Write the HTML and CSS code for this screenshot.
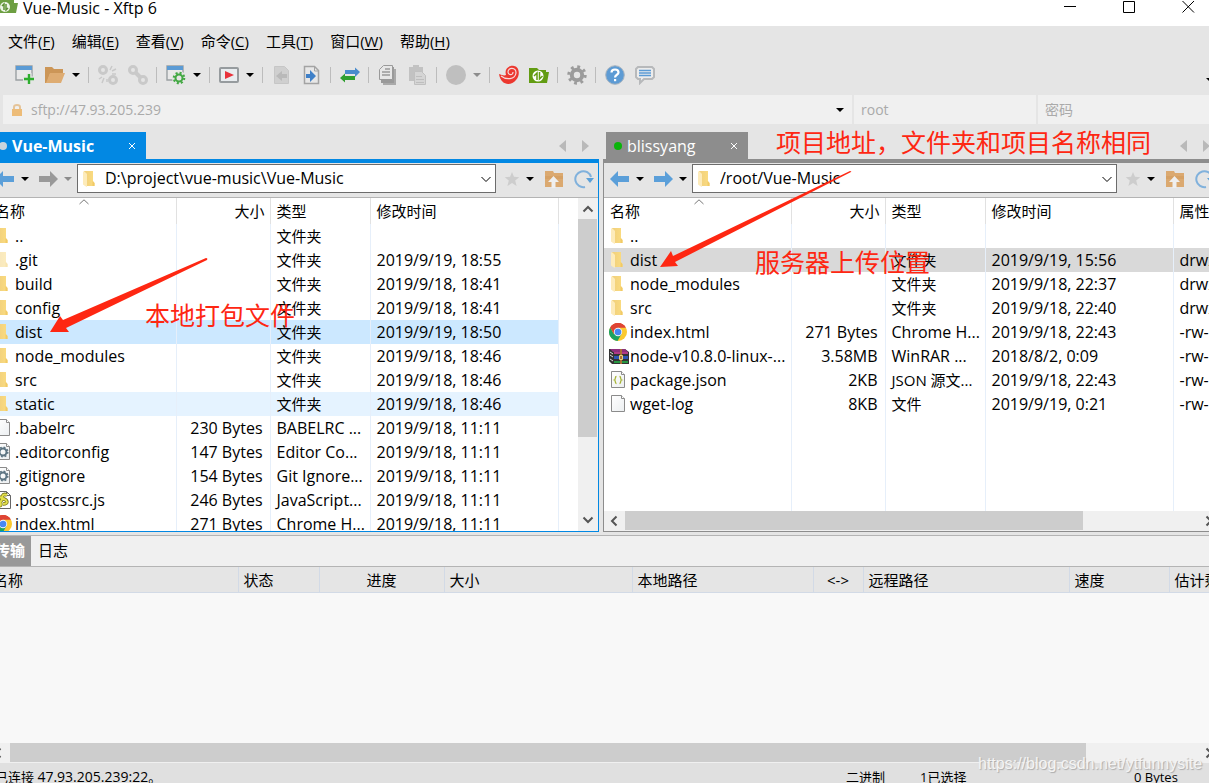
FILE: index.html
```html
<!DOCTYPE html>
<html lang="zh-CN">
<head>
<meta charset="utf-8">
<title>Vue-Music - Xftp 6</title>
<link rel="stylesheet" href="styles.css">
</head>
<body>
<svg class="defs" aria-hidden="true">
  <defs>
    <linearGradient id="fold" x1="0" x2="1"><stop offset="0" stop-color="#f0cf7c"/><stop offset="1" stop-color="#fbdc80"/></linearGradient>
    <linearGradient id="paper" x1="0" x2="1" y2="1"><stop offset="0" stop-color="#fff"/><stop offset="1" stop-color="#eceff1"/></linearGradient>
    <symbol id="folder" viewBox="0 0 20 20"><path fill="url(#fold)" d="M3 2h9v10l1.500 2v3H4z"/><path fill="#f1ca66" d="M11.500 12l2 2v3h-2z"/><path fill="#fdebba" d="M2 2.500h1.500L6 5v13l-2-1-2-1.500z"/></symbol>
    <symbol id="file" viewBox="0 0 20 20"><path fill="url(#paper)" stroke="#8b8b8b" d="M2.500 1.500h10l3 3v13h-13z"/><path fill="#fff" stroke="#8b8b8b" d="M12.500 1.500v3h3"/></symbol>
    <symbol id="gearfile" viewBox="0 0 20 20"><use href="#file"/><circle cx="9" cy="10" r="3.500" fill="none" stroke="#5d7583" stroke-width="2"/><circle cx="9" cy="10" r="4.800" fill="none" stroke="#5d7583" stroke-width="1.500" stroke-dasharray="1.900 1.870"/></symbol>
    <symbol id="jsfile" viewBox="0 0 20 20"><path fill="#fff" stroke="#666" d="M1.500 1.500h11l4 4v13h-15z"/><path fill="none" stroke="#666" d="M12.500 1.500v4h4"/><path fill="none" stroke="#77761b" stroke-width="3.600" d="M13 5C8 3 7 8 10 9s5 5-1 5M3 8c5-2 6 1 4 3s3 5-4 5"/><path fill="none" stroke="#e3df4b" stroke-width="2" d="M13 5C8 3 7 8 10 9s5 5-1 5M3 8c5-2 6 1 4 3s3 5-4 5"/></symbol>
    <symbol id="jsonfile" viewBox="0 0 20 20"><use href="#file"/><path fill="none" stroke="#a6b435" stroke-width="1.300" d="M7.500 6.500c-2 0-.5 3-2 3.500 1.500.5 0 3.500 2 3.500M10.500 6.500c2 0 .5 3 2 3.500-1.500.5 0 3.500-2 3.500"/></symbol>
    <symbol id="chrome" viewBox="0 0 20 20"><circle cx="9" cy="10" r="9" fill="#fbc92f"/><path fill="#de4435" d="M9 10L1.200 5.500A9 9 0 0 1 16.800 5.500H9z"/><path fill="#1ca261" d="M1.200 5.500A9 9 0 0 0 8.500 19l4-7-8-.5z"/><path fill="#de4435" d="M1.200 5.500L5 12l4-6.500h7.800A9 9 0 0 0 1.200 5.500"/><circle cx="9" cy="10" r="4.200" fill="#f2f5fa"/><circle cx="9" cy="10" r="3.300" fill="#4688f1"/></symbol>
    <symbol id="rar" viewBox="0 0 20 20"><path fill="#333" d="M0 3h16l4 3v12H3l-3-3z"/><path fill="#8e2f7c" d="M1 3h15l3 3H4z"/><path fill="#b03a86" d="M5 6h14v2H5z"/><path fill="#2d55b5" d="M5 10h14v3H5z"/><path fill="#259642" d="M5 15h14v2H5z"/><path stroke="#ddd" d="M1 6l3 2M1 9l3 2M1 13l3 2"/><path fill="#a96f35" d="M11 3h2v15h-2z"/><path fill="none" stroke="#e9d078" d="M10.500 9.500h3v4h-3z"/></symbol>
    <symbol id="caret" viewBox="0 0 8 8"><path d="M0 2h8L4 6z" fill="currentColor"/></symbol>
    <symbol id="left" viewBox="0 0 20 20"><path fill="currentColor" d="M0 10l8-8v5h11v6H8v5z"/></symbol>
    <symbol id="right" viewBox="0 0 20 20"><path fill="currentColor" d="M20 10l-8-8v5H1v6h11v5z"/></symbol>
    <symbol id="star" viewBox="0 0 18 18"><path fill="#cdcdcd" d="M9 1l2.200 5.600 6 .4-4.600 3.800L14.200 17 9 13.600 3.800 17l1.600-6.200L.8 7l6-.4z"/></symbol>
    <symbol id="folderup" viewBox="0 0 20 20"><path fill="#dba970" d="M1 2h8l1 2h9v14H1z"/><path fill="#cf9656" d="M1 7h18v3H1z" opacity=".4"/><path fill="#efefef" d="M9.500 7L15 13h-3.500v6h-4v-6H4z"/></symbol>
    <symbol id="refresh" viewBox="0 0 20 20"><path fill="none" stroke="#80b1dc" stroke-width="2" d="M17 8A8 8 0 1 0 11 18"/><path fill="#5ba0d8" d="M12 9h8l-4 5z"/></symbol>
    <symbol id="tri-l" viewBox="0 0 8 12"><path fill="#b9b9b9" d="M7 0v12L0 6z"/></symbol>
    <symbol id="tri-r" viewBox="0 0 8 12"><path fill="#b9b9b9" d="M1 0v12l7-6z"/></symbol>
    <symbol id="down" viewBox="0 0 10 10"><path fill="none" stroke="currentColor" d="M.5 3L5 7.500 9.500 3"/></symbol>
    <symbol id="x" viewBox="0 0 8 8"><path fill="none" stroke="currentColor" d="M1 1l6 6M7 1L1 7"/></symbol>
    <symbol id="b-up" viewBox="0 0 12 12"><path fill="none" stroke="#555" stroke-width="2" d="M1.500 8.500L6 4l4.500 4.500"/></symbol>
    <symbol id="b-down" viewBox="0 0 12 12"><path fill="none" stroke="#555" stroke-width="2" d="M1.500 3.500L6 8l4.500-4.500"/></symbol>
    <symbol id="b-left" viewBox="0 0 12 12"><path fill="none" stroke="#555" stroke-width="2" d="M7.500 1.500L3 6l4.500 4.500"/></symbol>
    <symbol id="b-right" viewBox="0 0 12 12"><path fill="none" stroke="#555" stroke-width="2" d="M3.500 1.500L8 6l-4.500 4.500"/></symbol>
    <symbol id="win" viewBox="0 0 20 20"><path fill="#e9e9e9" stroke="#9ba0a3" stroke-width="1.400" d="M1 1h16v14H1z"/><path fill="#5b9bd5" d="M1 1h16v4H1z"/></symbol>
    <symbol id="link" viewBox="0 0 20 20"><g fill="none" stroke="#c9c9c9" stroke-width="3"><circle cx="5" cy="5" r="3.500"/><circle cx="15" cy="15" r="3.500"/></g></symbol>
  </defs>
</svg>

<div class="window">
  <header class="titlebar">
    <svg width="18" height="14" viewBox="0 0 18 14"><path fill="#6d9f42" d="M0 0h14v3h4l-2 10H0z"/><circle cx="5" cy="7" r="5" fill="#eef5e8"/><path fill="none" stroke="#5f9136" stroke-width="1.500" d="M4 10V4L2 6M6 4v6l2-2"/></svg>
    <h1 class="title">Vue-Music - Xftp 6</h1>
    <div class="controls">
      <button aria-label="最小化"><svg width="13" height="13"><path stroke="#000" d="M0 6.500h12"/></svg></button>
      <button aria-label="最大化"><svg width="13" height="13"><path fill="none" stroke="#000" d="M.5 1.500h11v11H.5z"/></svg></button>
      <button aria-label="关闭"><svg width="13" height="13"><path stroke="#000" d="M.5 1l11.500 11.500M12 1L.5 12.500"/></svg></button>
    </div>
  </header>

  <nav class="menubar">
    <button>文件(<u>F</u>)</button><button>编辑(<u>E</u>)</button><button>查看(<u>V</u>)</button><button>命令(<u>C</u>)</button><button>工具(<u>T</u>)</button><button>窗口(<u>W</u>)</button><button>帮助(<u>H</u>)</button>
  </nav>

  <div class="toolbar">
    <button class="tool" aria-label="新建"><svg viewBox="0 0 20 20"><use href="#win"/><path stroke="#e5e5e5" stroke-width="5" d="M14 8v12M8 14h12"/><path stroke="#2eae2e" stroke-width="2.400" d="M14 9v10M9 14h10"/></svg></button>
    <button class="tool" aria-label="打开"><svg viewBox="0 0 20 20"><path fill="#cc9657" d="M0 2h7l2 2h9v5H5L2 18H0z"/><path fill="#deac72" d="M5 8h15l-4 10H1z"/></svg></button>
    <button class="drop" aria-label="打开选项"><svg><use href="#caret"/></svg></button>
    <span class="sep"></span>
    <button class="tool" aria-label="断开"><svg viewBox="0 0 20 20"><use href="#link"/><path stroke="#c9c9c9" stroke-width="1.500" d="M12 5l2-4M14 6l4-2M14 9h4M6 13l-2 5M4 12l-3 2M9 14v3"/></svg></button>
    <button class="tool" aria-label="连接"><svg viewBox="0 0 20 20"><use href="#link"/><path stroke="#c9c9c9" stroke-width="4" d="M7 7l6 6"/></svg></button>
    <span class="sep"></span>
    <button class="tool" aria-label="会话属性"><svg viewBox="0 0 20 20"><use href="#win"/><circle cx="13" cy="13" r="7" fill="#e5e5e5"/><circle cx="13" cy="13" r="3.500" fill="none" stroke="#43a843" stroke-width="2"/><circle cx="13" cy="13" r="5.200" fill="none" stroke="#43a843" stroke-width="2.200" stroke-dasharray="2 2.080"/></svg></button>
    <button class="drop" aria-label="属性选项"><svg><use href="#caret"/></svg></button>
    <span class="sep"></span>
    <button class="tool" aria-label="启动"><svg viewBox="0 0 20 20"><rect x="1" y="3" width="18" height="14" rx="1" fill="#e8ecef" stroke="#969b9e" stroke-width="2"/><path fill="#e8323c" d="M6 6l9 4-9 4z"/></svg></button>
    <button class="drop" aria-label="启动选项"><svg><use href="#caret"/></svg></button>
    <span class="sep"></span>
    <button class="tool" aria-label="下载"><svg viewBox="0 0 20 20"><path fill="#cfcfcf" stroke="#c6c6c6" d="M2.500 1.500h10l4 4v13h-14z"/><path fill="#b9b9b9" d="M4 11l6-5v3h5v4h-5v3z"/></svg></button>
    <button class="tool" aria-label="上传"><svg viewBox="0 0 20 20"><path fill="#e7e7e7" stroke="#a3a3a3" stroke-width="1.500" d="M2.500 1.500h10l4 4v13h-14z"/><path fill="none" stroke="#a3a3a3" d="M12.500 1v5H17"/><path fill="#3f80c8" d="M14 11L8 5v4H4v4h4v4z"/></svg></button>
    <span class="sep"></span>
    <button class="tool" aria-label="同步"><svg viewBox="0 0 20 20"><path fill="#4a8ccd" d="M20 7l-5-4.500V5H5v4h10v3z"/><path fill="#30a030" d="M0 13l5-4.500V11h10v4H5v2.500z"/></svg></button>
    <span class="sep"></span>
    <button class="tool" aria-label="复制"><svg viewBox="0 0 20 20"><path fill="#aaa" d="M5 4h13v16H5z"/><path fill="#9a9a9a" d="M3 2h13v16H3z"/><path fill="#e7e7e7" stroke="#9a9a9a" d="M5.500.500h9v14h-13v-10z"/><path stroke="#9a9a9a" stroke-width="1.500" d="M4 7h8M4 10h8M7 4h5"/></svg></button>
    <button class="tool" aria-label="粘贴"><svg viewBox="0 0 20 20"><path fill="#c2c2c2" d="M1 2h4V0h6v2h4v14H1z"/><path fill="#d5d5d5" stroke="#c0c0c0" d="M6.500 6.500h7l4 4v9h-11z"/><path stroke="#bebebe" d="M8 11.500h6M8 14.500h8M8 17.500h8"/></svg></button>
    <span class="sep"></span>
    <button class="tool" aria-label="停止"><svg viewBox="0 0 20 20"><circle cx="10" cy="10" r="10" fill="#bfbfbf"/></svg></button>
    <button class="drop muted" aria-label="停止选项"><svg><use href="#caret"/></svg></button>
    <span class="sep"></span>
    <button class="tool" aria-label="Xshell"><svg viewBox="0 0 20 20"><path fill="#ec382f" d="M0 9c3 1 5 2 7 1C5 4 10 0 15 1c6 1 6 10 2 14-5 6-15 6-17-6z"/><path fill="none" stroke="#f5dada" stroke-width="1.200" d="M2 11c5 4 14 4 15-3 0-6-8-6-8-1 0 3 5 4 5 0"/></svg></button>
    <button class="tool" aria-label="Xftp"><svg viewBox="0 0 20 20"><path fill="#629c12" d="M0 3h8l2 2h7v2h3l-2 11H0z"/><circle cx="9" cy="11" r="5.500" fill="#fff"/><path fill="none" stroke="#629c12" stroke-width="1.500" d="M8 15V8l-3 3M10.500 7v7l3-3"/></svg></button>
    <span class="sep"></span>
    <button class="tool" aria-label="选项"><svg viewBox="0 0 20 20"><circle cx="10" cy="10" r="5.200" fill="none" stroke="#9b9b9b" stroke-width="4"/><circle cx="10" cy="10" r="8.200" fill="none" stroke="#9b9b9b" stroke-width="3" stroke-dasharray="2.800 3.640"/></svg></button>
    <span class="sep"></span>
    <button class="tool" aria-label="帮助"><svg viewBox="0 0 20 20"><circle cx="10" cy="10" r="9.300" fill="#5d9bd4" stroke="#a9b4be"/><path fill="none" stroke="#fff" stroke-width="2.200" d="M6.500 7.500c0-4 7-4 7 0 0 2.500-3.500 2-3.500 5"/><path fill="#fff" d="M9 14h2.200v2.200H9z"/></svg></button>
    <button class="tool" aria-label="反馈"><svg viewBox="0 0 20 20"><path fill="#ececec" stroke="#b7b9bb" stroke-width="2" d="M3 2h14l2 2v8l-2 2H9l-4 4v-4H3l-2-2V4z"/><path stroke="#5b9bd5" stroke-width="1.600" d="M4 5.500h12M4 8h12M4 10.500h12"/></svg></button>
    <button class="drop last" aria-label="更多"><svg><use href="#caret"/></svg></button>
  </div>

  <form class="address">
    <label class="field host"><svg width="12" height="12" viewBox="0 0 12 12"><path fill="none" stroke="#e5c499" stroke-width="2" d="M3 6V3q0-2 3-2t3 2v3"/><path fill="#edbc78" d="M1 5h10v7H1z"/></svg><input aria-label="主机" value="sftp://47.93.205.239"><svg width="8" height="8"><use href="#caret"/></svg></label>
    <input class="field" aria-label="用户名" value="root">
    <input class="field" aria-label="密码" placeholder="密码">
  </form>

  <main class="panes">
    <section class="pane local">
      <div class="tabs"><button class="tab"><i class="dot"></i><span>Vue-Music</span><svg width="8" height="8"><use href="#x"/></svg></button><span class="tab-nav"><svg><use href="#tri-l"/></svg><svg><use href="#tri-r"/></svg></span></div>
      <div class="pane-body">
        <div class="nav">
          <button class="go" aria-label="后退"><svg><use href="#left"/></svg></button><button class="drop" aria-label="后退记录"><svg><use href="#caret"/></svg></button>
          <button class="go off" aria-label="前进"><svg><use href="#right"/></svg></button><button class="drop muted" aria-label="前进记录"><svg><use href="#caret"/></svg></button>
          <div class="combo"><svg width="20" height="20"><use href="#folder"/></svg><input aria-label="本地路径" value="D:\project\vue-music\Vue-Music"><button aria-label="展开"><svg width="10" height="10"><use href="#down"/></svg></button></div>
          <button class="fav" aria-label="收藏"><svg><use href="#star"/></svg></button><button class="drop" aria-label="收藏列表"><svg><use href="#caret"/></svg></button>
          <button class="up" aria-label="上级"><svg><use href="#folderup"/></svg></button><button class="up" aria-label="刷新"><svg><use href="#refresh"/></svg></button>
        </div>
        <div class="list">
          <div class="table-wrap">
          <table class="files">
            <colgroup><col class="c-name"><col class="c-size"><col class="c-type"><col class="c-time"><col></colgroup>
            <thead><tr><th>名称<svg class="sort" width="10" height="6"><path fill="none" stroke="#777" d="M.5 5L5 .8 9.500 5"/></svg></th><th class="num">大小</th><th>类型</th><th>修改时间</th><td></td></tr></thead>
            <tbody>
            <tr><td><svg><use href="#folder"/></svg>..</td><td></td><td class="zh">文件夹</td><td></td><td></td></tr>
            <tr><td><svg class="dim"><use href="#folder"/></svg>.git</td><td></td><td class="zh">文件夹</td><td>2019/9/19, 18:55</td><td></td></tr>
            <tr><td><svg><use href="#folder"/></svg>build</td><td></td><td class="zh">文件夹</td><td>2019/9/18, 18:41</td><td></td></tr>
            <tr><td><svg><use href="#folder"/></svg>config</td><td></td><td class="zh">文件夹</td><td>2019/9/18, 18:41</td><td></td></tr>
            <tr class="selected"><td><svg><use href="#folder"/></svg>dist</td><td></td><td class="zh">文件夹</td><td>2019/9/19, 18:50</td><td></td></tr>
            <tr><td><svg><use href="#folder"/></svg>node_modules</td><td></td><td class="zh">文件夹</td><td>2019/9/18, 18:46</td><td></td></tr>
            <tr><td><svg><use href="#folder"/></svg>src</td><td></td><td class="zh">文件夹</td><td>2019/9/18, 18:46</td><td></td></tr>
            <tr class="hover"><td><svg><use href="#folder"/></svg>static</td><td></td><td class="zh">文件夹</td><td>2019/9/18, 18:46</td><td></td></tr>
            <tr><td><svg><use href="#file"/></svg>.babelrc</td><td class="num">230 Bytes</td><td>BABELRC ...</td><td>2019/9/18, 11:11</td><td></td></tr>
            <tr><td><svg><use href="#gearfile"/></svg>.editorconfig</td><td class="num">147 Bytes</td><td>Editor Co...</td><td>2019/9/18, 11:11</td><td></td></tr>
            <tr><td><svg><use href="#gearfile"/></svg>.gitignore</td><td class="num">154 Bytes</td><td>Git Ignore...</td><td>2019/9/18, 11:11</td><td></td></tr>
            <tr><td><svg><use href="#jsfile"/></svg>.postcssrc.js</td><td class="num">246 Bytes</td><td>JavaScript...</td><td>2019/9/18, 11:11</td><td></td></tr>
            <tr><td><svg><use href="#chrome"/></svg>index.html</td><td class="num">271 Bytes</td><td>Chrome H...</td><td>2019/9/18, 11:11</td><td></td></tr>
            </tbody>
          </table>
          </div>
          <div class="vscroll"><button aria-label="向上"><svg><use href="#b-up"/></svg></button><div class="track"><div class="thumb"></div></div><button aria-label="向下"><svg><use href="#b-down"/></svg></button></div>
        </div>
      </div>
    </section>

    <section class="pane remote">
      <div class="tabs"><button class="tab"><i class="dot"></i><span>blissyang</span><svg width="8" height="8"><use href="#x"/></svg></button><span class="tab-nav"><svg><use href="#tri-l"/></svg><svg><use href="#tri-r"/></svg></span></div>
      <div class="pane-body">
        <div class="nav">
          <button class="go" aria-label="后退"><svg><use href="#left"/></svg></button><button class="drop" aria-label="后退记录"><svg><use href="#caret"/></svg></button>
          <button class="go" aria-label="前进"><svg><use href="#right"/></svg></button><button class="drop" aria-label="前进记录"><svg><use href="#caret"/></svg></button>
          <div class="combo"><svg width="20" height="20"><use href="#folder"/></svg><input aria-label="远程路径" value="/root/Vue-Music"><button aria-label="展开"><svg width="10" height="10"><use href="#down"/></svg></button></div>
          <button class="fav" aria-label="收藏"><svg><use href="#star"/></svg></button><button class="drop" aria-label="收藏列表"><svg><use href="#caret"/></svg></button>
          <button class="up" aria-label="上级"><svg><use href="#folderup"/></svg></button><button class="up" aria-label="刷新"><svg><use href="#refresh"/></svg></button>
        </div>
        <div class="list">
          <div class="table-wrap">
          <table class="files">
            <colgroup><col class="c-name"><col class="c-size"><col class="c-type"><col class="c-time"><col></colgroup>
            <thead><tr><th>名称<svg class="sort" width="10" height="6"><path fill="none" stroke="#777" d="M.5 5L5 .8 9.500 5"/></svg></th><th class="num">大小</th><th>类型</th><th>修改时间</th><th>属性</th></tr></thead>
            <tbody>
            <tr><td><svg><use href="#folder"/></svg>..</td><td></td><td></td><td></td><td></td></tr>
            <tr class="selected"><td><svg><use href="#folder"/></svg>dist</td><td></td><td class="zh">文件夹</td><td>2019/9/19, 15:56</td><td>drwx</td></tr>
            <tr><td><svg><use href="#folder"/></svg>node_modules</td><td></td><td class="zh">文件夹</td><td>2019/9/18, 22:37</td><td>drwx</td></tr>
            <tr><td><svg><use href="#folder"/></svg>src</td><td></td><td class="zh">文件夹</td><td>2019/9/18, 22:40</td><td>drwx</td></tr>
            <tr><td><svg><use href="#chrome"/></svg>index.html</td><td class="num">271 Bytes</td><td>Chrome H...</td><td>2019/9/18, 22:43</td><td>-rw-r</td></tr>
            <tr><td><svg><use href="#rar"/></svg>node-v10.8.0-linux-...</td><td class="num">3.58MB</td><td>WinRAR ...</td><td>2018/8/2, 0:09</td><td>-rw-r</td></tr>
            <tr><td><svg><use href="#jsonfile"/></svg>package.json</td><td class="num">2KB</td><td class="zh">JSON 源文...</td><td>2019/9/18, 22:43</td><td>-rw-r</td></tr>
            <tr><td><svg><use href="#file"/></svg>wget-log</td><td class="num">8KB</td><td class="zh">文件</td><td>2019/9/19, 0:21</td><td>-rw-r</td></tr>
            <tr class="rest"><td></td><td></td><td></td><td></td><td></td></tr>
            </tbody>
          </table>
          </div>
        </div>
        <div class="hscroll"><button aria-label="向左"><svg><use href="#b-left"/></svg></button><div class="track"><div class="thumb"></div></div><button aria-label="向右"><svg><use href="#b-right"/></svg></button></div>
      </div>
    </section>
  </main>

  <section class="queue">
    <div class="queue-tabs"><button class="on">传输</button><button>日志</button></div>
    <table class="transfers">
      <colgroup><col class="q-name"><col class="q-state"><col class="q-progress"><col class="q-size"><col class="q-local"><col class="q-dir"><col class="q-remote"><col class="q-speed"><col></colgroup>
      <thead><tr><th>名称</th><th>状态</th><th class="mid">进度</th><th>大小</th><th>本地路径</th><th class="mid">&lt;-&gt;</th><th>远程路径</th><th>速度</th><th>估计剩余</th></tr></thead>
    </table>
    <div class="queue-body"></div>
    <div class="hscroll"><button aria-label="向左"><svg><use href="#b-left"/></svg></button><div class="track"><div class="thumb"></div></div><button aria-label="向右"><svg><use href="#b-right"/></svg></button></div>
  </section>

  <footer class="status"><span class="conn">已连接 <span class="host-ip">47.93.205.239:22</span>。</span><span class="mode">二进制</span><span class="count">1已选择</span><span class="bytes">0 Bytes</span></footer>

  <div class="notes">
    <svg width="1209" height="400" aria-hidden="true"><g fill="#fe2712"><path d="M50 332l10-16 3 4L206 258q2 0 1 2L66 328l3 4z"/><path d="M660 267l11-16 2 5L850 171q2 0 1 1L675 262l3 4z"/></g></svg>
    <p class="note n-address">项目地址，文件夹和项目名称相同</p>
    <p class="note n-upload">服务器上传位置</p>
    <p class="note n-build">本地打包文件</p>
    <p class="watermark">https://blog.csdn.net/ytfunnysite</p>
  </div>
</div>
</body>
</html>
```
FILE: styles.css
```css
* { box-sizing: border-box; }
body {
  margin: 0;
  height: 100vh;
  overflow: hidden;
  background: #e5e5e5;
  color: #000;
  font: 15px/20px "Open Sans", "Noto Sans CJK SC", sans-serif;
}
button, input {
  margin: 0;
  padding: 0;
  border: 0;
  background: none;
  color: inherit;
  font: inherit;
  min-width: 0;
}
svg { display: block; flex: none; }
.defs { position: absolute; width: 0; height: 0; }

/* The window is a little wider than the viewport on both sides. */
.window {
  position: relative;
  display: flex;
  flex-direction: column;
  height: 100%;
  margin: 0 -11px 0 -12px;
}

.titlebar {
  display: flex;
  height: 26px;
  padding: 0 25px 0 12px;
  background: #fff;
}
.title { margin: 0 0 0 5px; font-size: 16px; font-weight: 400; line-height: 16px; }
.controls { display: flex; gap: 46px; margin-left: auto; align-items: flex-start; }

.menubar { display: flex; gap: 17px; padding: 5px 0 5px 20px; }
.menubar u { text-underline-offset: 2px; }

.toolbar { display: flex; align-items: center; height: 39px; padding: 0 0 1px 27px; }
.tool + .tool { margin-left: 10px; }
.tool svg { width: 20px; height: 20px; }
.drop { width: 8px; margin-left: 6px; }
.drop svg { width: 8px; height: 8px; }
.toolbar .drop { margin-left: 7px; }
.muted { color: #8c8c8c; }
.sep { width: 1px; height: 16px; margin: 0 9px 0 8px; background: #bcbcbc; }
.toolbar .last { margin: 10px 6px 0 auto; }

.address {
  display: grid;
  grid-template-columns: 849fr 182fr 182fr;
  gap: 2px;
  height: 29px;
  padding-left: 15px;
  color: #aaa;
}
.field { padding: 0 7px; background: #f0f0f0; font-size: 14px; }
.field::placeholder { color: #aaa; }
.host { display: flex; align-items: center; gap: 8px; padding: 0 8px; }
.host input { flex: 1; }
.host > :last-child { color: #000; }

.panes {
  display: grid;
  grid-template-columns: 611fr 617fr;
  gap: 4px;
  flex: 1;
  min-height: 0;
  padding-top: 8px;
}
.pane { display: flex; flex-direction: column; min-width: 0; min-height: 0; }
.local { --accent: #0288e3; }
.remote { --accent: #8d8d8d; }
.tabs { display: flex; justify-content: space-between; height: 27px; padding: 0 10px 0 3px; }
.tab {
  display: flex;
  align-items: center;
  padding: 1px 10px 0 8px;
  background: var(--accent);
  color: #fff;
  font-size: 16px;
}
.local .tab { font-weight: 700; }
.dot { width: 8px; height: 8px; margin-right: 5px; border-radius: 50%; background: #c9d4dc; }
.remote .dot { background: #0ab40a; }
.tab svg { margin-left: 34px; }
.tab-nav { display: flex; align-items: center; gap: 14px; }
.tab-nav svg { width: 8px; height: 12px; }

.pane-body {
  display: flex;
  flex-direction: column;
  flex: 1;
  min-height: 0;
  border: 1px solid var(--accent);
  border-top-width: 4px;
}
.nav {
  display: flex;
  align-items: center;
  height: 35px;
  padding: 0 4px 3px 6px;
  border-bottom: 1px solid #b4b4b4;
}
.go { color: #5b9fd9; }
.go.off { color: #999; }
.drop + .go { margin-left: 9px; }
.go svg, .up svg { width: 20px; height: 20px; }
.combo {
  display: flex;
  align-items: center;
  flex: 1;
  height: 29px;
  margin: 0 8px 0 5px;
  padding: 0 4px 0 3px;
  border: 1px solid #6c6c6c;
  background: #fff;
}
.combo input { flex: 1; height: 26px; margin-left: 4px; padding-bottom: 2px; font-size: 16px; }
.fav svg { width: 16px; height: 18px; }
.up { margin-left: 10px; }

.list { display: flex; flex: 1; min-height: 0; background: #fff; }
.table-wrap { flex: 1; min-width: 0; overflow: hidden; }
.files { width: 100%; height: 100%; border-collapse: collapse; table-layout: fixed; }
.c-name { width: 187px; }
.c-size { width: 94px; }
.c-type { width: 100px; }
.c-time { width: 188px; }
.files th, .files td {
  position: relative;
  height: 24px;
  padding: 0 0 0 6px;
  border-right: 1px solid #e6effa;
  line-height: 20px;
  text-align: left;
  font-weight: 400;
  white-space: nowrap;
  overflow: hidden;
}
.files td { font-size: 16px; }
.files th { height: 26px; border-color: #e1e1e1; }
.files tr > :last-child { border-right: 0; }
.files .zh { font-size: 15px; }
.files td:first-child { padding-left: 5px; }
.files td svg { display: inline-block; width: 20px; height: 20px; margin-right: 1px; vertical-align: top; }
.files .dim { opacity: .5; }
.files .num { padding: 0 7px 0 0; text-align: right; }
.files th.num { padding-right: 5px; }
.sort { position: absolute; top: 1px; left: 48%; }
.local .selected td:not(:last-child) { background: #cce8ff; }
.local .hover td:not(:last-child) { background: #e5f3ff; }
.remote .selected td { background: #d9d9d9; }
.files .rest td { height: auto; }

.vscroll { display: flex; flex-direction: column; width: 20px; padding-right: 1px; background: #f0f0f0; }
.vscroll button { display: grid; place-items: center; height: 21px; }
.vscroll svg, .hscroll svg { width: 12px; height: 12px; }
.track { flex: 1; }
.thumb { background: #cdcdcd; }
.vscroll .thumb { height: 75%; }
.hscroll { display: flex; height: 20px; background: #f0f0f0; }
.hscroll button { display: grid; place-items: center; width: 21px; }
.hscroll .thumb { width: 80%; height: 19px; }

.queue { margin-top: 3px; border-top: 1px solid #b4b4b4; background: #f0f0f0; }
.queue-tabs { display: flex; height: 31px; border-bottom: 1px solid #b4b4b4; }
.queue-tabs button { padding: 0 7px 2px; }
.queue-tabs .on { width: 43px; background: #999; color: #fff; font-weight: 700; text-align: right; padding-right: 6px; }
.transfers { width: 100%; border-collapse: collapse; table-layout: fixed; background: #e5e5e5; }
.transfers th {
  height: 26px;
  padding: 1px 0 0 5px;
  border: 1px solid #d2dae6;
  border-width: 0 1px 1px 0;
  font-weight: 400;
  text-align: left;
  white-space: nowrap;
  overflow: hidden;
}
.transfers .mid { padding: 1px 0 0; text-align: center; }
.q-name { width: 250px; }
.q-state { width: 81px; }
.q-progress { width: 125px; }
.q-size { width: 188px; }
.q-local { width: 181px; }
.q-dir { width: 50px; }
.q-remote { width: 206px; }
.q-speed { width: 100px; }
.queue-body { height: 150px; background: #f8f8f8; }
.queue .hscroll .thumb { width: 90.6%; }
.queue .hscroll button { width: 22px; }

.status { display: flex; height: 20px; padding: 4px 0 0 7px; background: #e0e0e0; font-size: 13px; white-space: nowrap; }
.host-ip { font-size: 14px; }
.conn { flex: 851; }
.mode { flex: 74; }
.count { flex: 214; }
.bytes { flex: 86; }

.notes { position: absolute; top: 0; left: 12px; pointer-events: none; }
.note { position: absolute; margin: 0; color: #fe2712; font-size: 25px; line-height: 30px; white-space: nowrap; }
.n-address { left: 776px; top: 127px; }
.n-upload { left: 755px; top: 247px; }
.n-build { left: 145px; top: 300px; }
.watermark {
  position: absolute;
  left: 978px;
  top: 754px;
  margin: 0;
  color: #f4f4f4;
  font: 16px/20px "Liberation Sans", sans-serif;
  text-shadow: 1px 1px 1px #aaa;
}
```
